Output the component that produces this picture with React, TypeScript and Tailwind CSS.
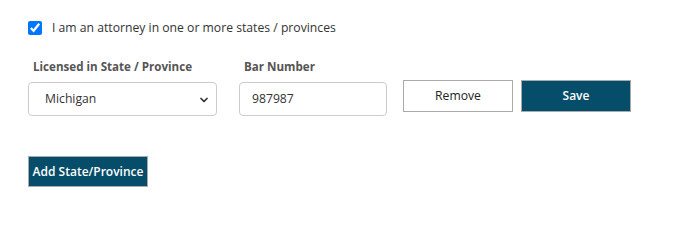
import { ChevronDown } from "lucide-react";

export default function App() {
  return (
    <div className="w-[673px] h-[205px] bg-white pl-[28px] pt-[20px] text-[#333] font-['Open_Sans',sans-serif]">
      {/* attorney checkbox */}
      <label className="flex items-center h-[16px]">
        <input type="checkbox" defaultChecked className="w-[14px] h-[14px] m-0 accent-[#0075ff]" />
        <span className="ml-[10px] text-[12.2px] text-[#333]">I am an attorney in one or more states / provinces</span>
      </label>

      {/* license row */}
      <div className="flex mt-[22px]">
        <div className="w-[189px]">
          <div className="pl-[5px] h-[24px] text-[11.6px] font-bold text-[#555]">Licensed in State / Province</div>
          <div className="relative h-[34px] border border-[#ccc] rounded-[4px] flex items-center pl-[16px] text-[12.2px] text-[#333]">
            Michigan
            <ChevronDown className="absolute right-[6px] top-[11px] w-[12px] h-[12px] text-[#333]" strokeWidth={3.5} />
          </div>
        </div>
        <div className="w-[148px] ml-[22px]">
          <div className="pl-[5px] h-[24px] text-[11.6px] font-bold text-[#555]">Bar Number</div>
          <div className="h-[34px] border border-[#ccc] rounded-[4px] flex items-center pl-[12px] text-[12.2px] text-[#333]">
            987987
          </div>
        </div>
        <div className="flex gap-[8px] ml-[16px] mt-[22px]">
          <button className="w-[110px] h-[32px] border border-[#aaa] bg-white text-[12.2px] text-[#222]">Remove</button>
          <button className="w-[110px] h-[32px] border border-[#aaa] bg-[#064d69] text-[12px] font-semibold text-white">Save</button>
        </div>
      </div>

      <button className="mt-[40px] w-[120px] h-[31px] border border-[#aaa] bg-[#064d69] text-[12px] font-semibold text-white whitespace-nowrap">
        Add State/Province
      </button>
    </div>
  );
}
